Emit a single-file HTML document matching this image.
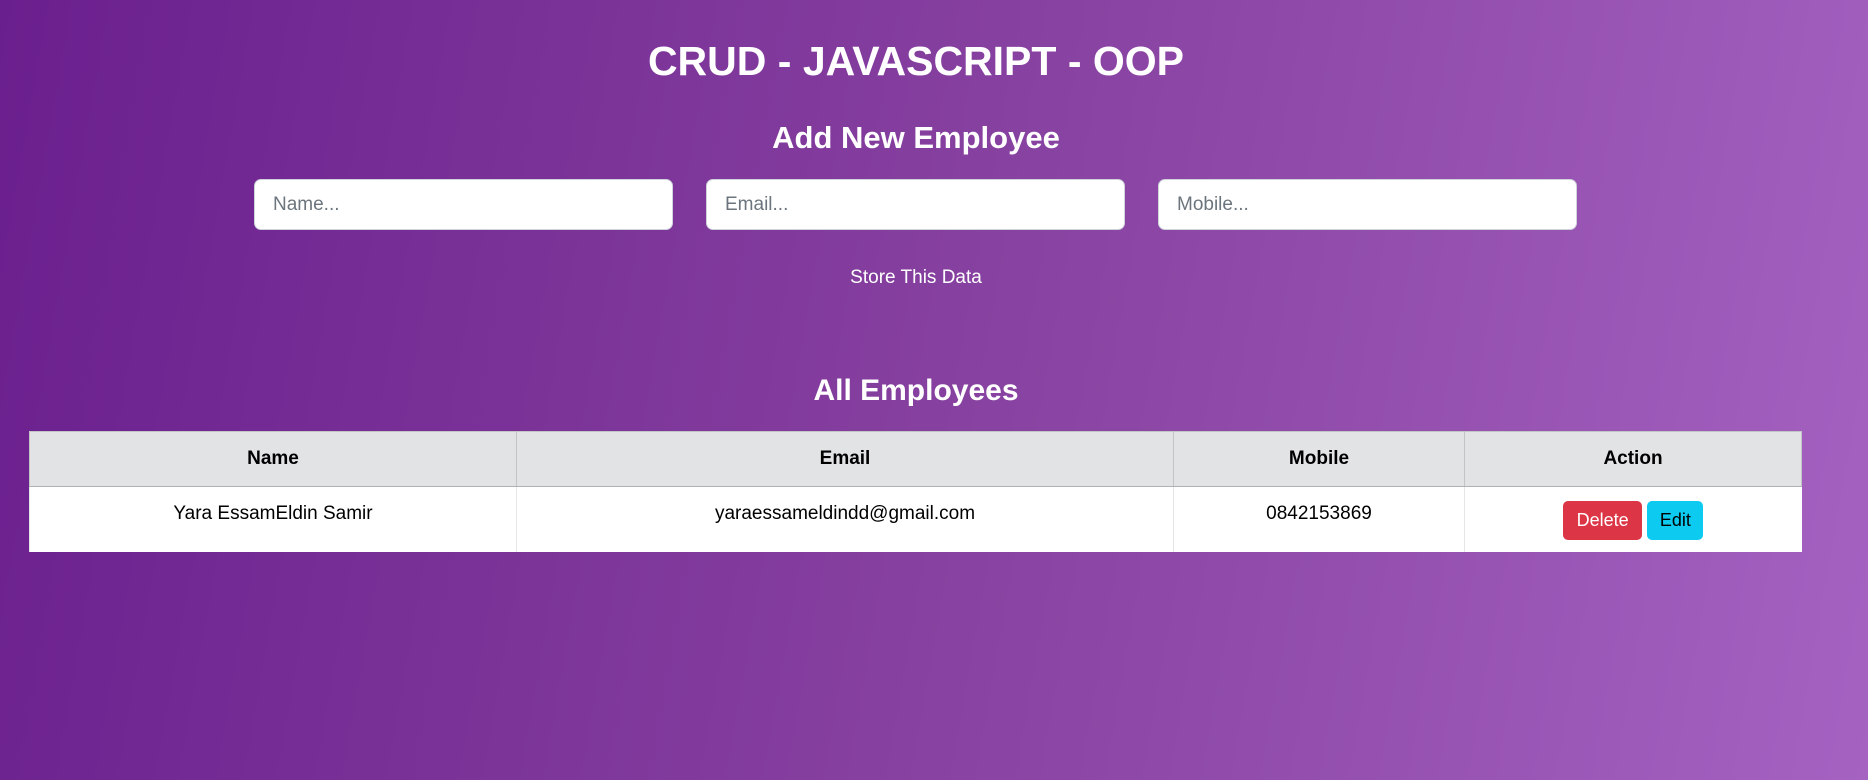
<!DOCTYPE html>
<html><head><meta charset="utf-8"><style>
*{box-sizing:border-box;margin:0;padding:0}
html,body{width:1868px;height:780px;overflow:hidden}
body{background:linear-gradient(100deg,#6a1f8e 0%,#86409f 50%,#a562c1 100%);font-family:"Liberation Sans",sans-serif;color:#fff;position:relative}
.c{position:absolute;left:0;width:1832px;text-align:center;font-weight:bold}
input{position:absolute;top:179px;height:51px;width:419px;border:1px solid #ced4da;border-radius:7px;background:#fff;font-family:"Liberation Sans",sans-serif;font-size:19px;padding-left:18px;color:#6c757d}
input::placeholder{color:#6c757d}
.store{position:absolute;top:267px;left:0;width:1832px;text-align:center;font-size:19px}
table{position:absolute;left:29px;top:431px;width:1773px;border-collapse:collapse;color:#000;font-size:19px}
th{background:#e2e3e5;height:55px;font-weight:bold;border:1px solid #c3c4c6;border-bottom:1px solid #b0b1b3}
td{background:#fff;height:65px;text-align:center;border-left:1px solid #e6e6e6;padding-bottom:10px}
.b{display:inline-block;border-radius:5px;font-size:18px;padding:9px 11px;vertical-align:middle}
</style></head><body>
<div class="c" style="top:38px;font-size:41px">CRUD - JAVASCRIPT - OOP</div>
<div class="c" style="top:120px;font-size:31px">Add New Employee</div>
<input style="left:254px" placeholder="Name...">
<input style="left:706px" placeholder="Email...">
<input style="left:1158px" placeholder="Mobile...">
<div class="store">Store This Data</div>
<div class="c" style="top:374px;font-size:30px">All Employees</div>
<table>
<tr><th style="width:487px">Name</th><th style="width:657px">Email</th><th style="width:291px">Mobile</th><th>Action</th></tr>
<tr><td>Yara EssamEldin Samir</td><td>yaraessameldindd@gmail.com</td><td>0842153869</td><td style="padding-bottom:0;padding-top:2px"><span class="b" style="background:#dc3545;color:#fff;width:79px;margin-left:0px">Delete</span> <span class="b" style="background:#0dcaf0;color:#000;width:56px">Edit</span></td></tr>
</table>
</body></html>
